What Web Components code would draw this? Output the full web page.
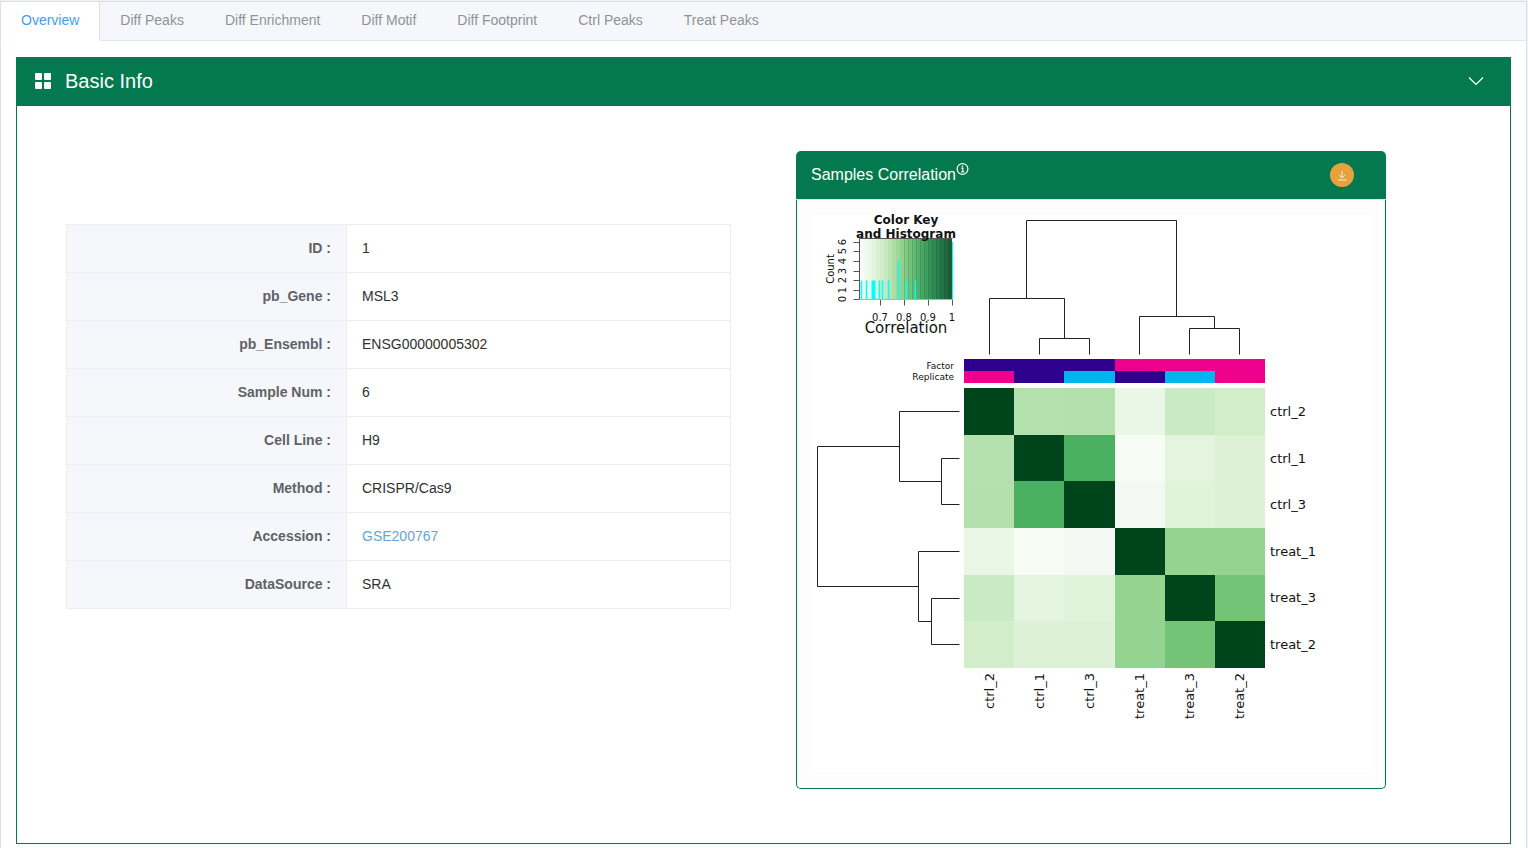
<!DOCTYPE html>
<html lang="en">
<head>
<meta charset="utf-8">
<meta name="viewport" content="width=device-width, initial-scale=1">
<title>Dataset overview</title>
<style>
  body { margin: 0; background: #eef4f6; color: #303133; font: 14px/20px "Liberation Sans", Arial, sans-serif; }
</style>
</head>
<body>
<dataset-page></dataset-page>

<template id="page-template">
  <style>
    :host { display: block; padding: 1px 1px 0 0; }
    main { box-sizing: border-box; min-height: calc(100vh - 1px); background: #fff; border: 1px solid #dcdfe6; border-bottom: 0; }
    .content { padding: 16px 15px 4px; }
    .columns { display: grid; grid-template-columns: minmax(0, 665fr) minmax(0, 590fr); gap: 65px; align-items: start; padding: 45px 124px 54px 49px; }
    info-table { margin-top: 73px; }
    @media (max-width: 1000px) { .columns { grid-template-columns: 1fr; padding: 24px; gap: 24px; } info-table { margin-top: 0; } }
  </style>
  <main>
    <tab-bar></tab-bar>
    <div class="content">
      <fold-panel>
        <span slot="title">Basic Info</span>
        <div class="columns">
          <info-table></info-table>
          <plot-card>
            <span slot="title">Samples Correlation</span>
            <correlation-heatmap></correlation-heatmap>
          </plot-card>
        </div>
      </fold-panel>
    </div>
  </main>
</template>

<template id="tabs-template">
  <style>
    :host { display: flow-root; background: #f5f7fa; border-bottom: 1px solid #e4e7ed; }
    [role=tablist] { display: flex; margin: -1px 0 -1px -1px; }
    button { box-sizing: border-box; height: 40px; margin: 0 -1px 0 0; padding: 0 20px 2px; border: 1px solid transparent; background: none; color: #909399; font: inherit; white-space: nowrap; cursor: pointer; }
    button[aria-selected=true] { color: #409eff; background: #fff; border-color: #dcdfe6; border-bottom-color: #fff; }
  </style>
  <div role="tablist"></div>
</template>

<template id="panel-template">
  <style>
    :host { display: block; border: 1px solid #04784f; }
    button { box-sizing: border-box; display: flex; align-items: center; gap: 14px; width: 100%; height: 48px; padding: 0 26px 2px 18px; border: 0; background: #04784f; color: #fff; font: inherit; font-size: 20px; line-height: 24px; text-align: left; cursor: pointer; }
    .title { flex: 1; }
    svg { display: block; fill: #fff; }
    .arrow { fill: none; stroke: #fff; }
  </style>
  <button type="button" aria-expanded="true">
    <svg width="16" height="16" viewBox="0 0 16 16" aria-hidden="true"><rect width="7" height="7" rx="1"/><rect x="9" width="7" height="7" rx="1"/><rect y="9" width="7" height="7" rx="1"/><rect x="9" y="9" width="7" height="7" rx="1"/></svg>
    <span class="title"><slot name="title"></slot></span>
    <svg class="arrow" width="16" height="16" viewBox="0 0 16 16" aria-hidden="true"><path d="M1 4.5 8 11.5 15 4.5" stroke-width="1.2"/></svg>
  </button>
  <div class="body"><slot></slot></div>
</template>

<template id="table-template">
  <style>
    :host { display: block; }
    table { width: 100%; border-collapse: collapse; table-layout: fixed; }
    th, td { box-sizing: border-box; height: 48px; padding: 0 15px 2px; border: 1px solid #ebeef5; }
    th { width: 280px; background: #f5f7fa; color: #606266; text-align: right; }
    td { color: #303133; }
    a { color: #67a5d1; text-decoration: none; }
  </style>
  <table><tbody></tbody></table>
</template>

<template id="card-template">
  <style>
    :host { display: block; }
    header { box-sizing: border-box; display: flex; align-items: center; justify-content: space-between; height: 49px; padding: 0 32px 0 15px; border-bottom: 1px solid #d5e9e1; border-radius: 5px 5px 0 0; background: #04784f; background-clip: padding-box; color: #fff; }
    h3 { display: flex; align-items: flex-start; margin: 0; font-size: 16px; font-weight: 400; line-height: 24px; }
    svg { display: block; }
    button { display: grid; place-items: center; width: 24px; height: 24px; padding: 0; border: 0; border-radius: 50%; background: #e6a23c; cursor: pointer; }
    .body { padding: 15px; border: 1px solid #04784f; border-top: 0; border-radius: 0 0 5px 5px; background: #fdfdfd; }
  </style>
  <header>
    <h3><slot name="title"></slot>
      <svg width="13" height="13" viewBox="0 0 13 13" fill="none" stroke="#fff" stroke-width="1.2" aria-hidden="true"><circle cx="6.5" cy="6" r="5.4"/><path d="M5.2 5.2H6.8V9M5 9H8.4"/><circle cx="6.5" cy="3.2" r=".8" fill="#fff" stroke="none"/></svg>
    </h3>
    <button type="button" aria-label="Download plot">
      <svg width="12" height="12" viewBox="0 0 12 12" fill="none" stroke="#fff" stroke-opacity=".8" aria-hidden="true"><path d="M6 2V9M3 6 6 9 9 6M2 11H10.5"/></svg>
    </button>
  </header>
  <div class="body"><slot></slot></div>
</template>

<template id="heatmap-template">
  <style>
    :host { display: block; background: #fff; }
    svg { display: block; width: 100%; height: auto; overflow: visible; }
    text { font-family: "DejaVu Sans", sans-serif; fill: #111; }
    .tree { fill: none; stroke: #222; }
    .axis { fill: none; stroke: #555; }
    .bars { fill: none; stroke: #0ff; }
  </style>
  <svg viewBox="0 0 558 558" role="img" aria-label="Sample correlation heatmap"></svg>
</template>

<script>
class TemplateElement extends HTMLElement {
  constructor(templateId) {
    super();
    this.attachShadow({ mode: "open" }).append(document.getElementById(templateId).content.cloneNode(true));
  }
}

customElements.define("tab-bar", class extends TemplateElement {
  constructor() {
    super("tabs-template");
    const list = this.shadowRoot.querySelector("[role=tablist]");
    ["Overview", "Diff Peaks", "Diff Enrichment", "Diff Motif", "Diff Footprint", "Ctrl Peaks", "Treat Peaks"].forEach((name, i) => {
      const tab = document.createElement("button");
      tab.type = "button";
      tab.textContent = name;
      tab.setAttribute("role", "tab");
      tab.setAttribute("aria-selected", String(i === 0));
      tab.addEventListener("click", () => {
        for (const other of list.children) other.setAttribute("aria-selected", String(other === tab));
      });
      list.append(tab);
    });
  }
});

customElements.define("fold-panel", class extends TemplateElement {
  constructor() {
    super("panel-template");
    const button = this.shadowRoot.querySelector("button");
    const body = this.shadowRoot.querySelector(".body");
    button.addEventListener("click", () => {
      body.hidden = !body.hidden;
      button.setAttribute("aria-expanded", String(!body.hidden));
    });
  }
});

customElements.define("info-table", class extends TemplateElement {
  constructor() {
    super("table-template");
    const rows = [["ID", "1"], ["pb_Gene", "MSL3"], ["pb_Ensembl", "ENSG00000005302"], ["Sample Num", "6"], ["Cell Line", "H9"], ["Method", "CRISPR/Cas9"], ["Accession", '<a href="#GSE200767">GSE200767</a>'], ["DataSource", "SRA"]];
    this.shadowRoot.querySelector("tbody").innerHTML = rows.map(([k, v]) => `<tr><th scope="row">${k} :</th><td>${v}</td></tr>`).join("");
  }
});

customElements.define("plot-card", class extends TemplateElement {
  constructor() { super("card-template"); }
});

customElements.define("correlation-heatmap", class extends TemplateElement {
  constructor() {
    super("heatmap-template");
    const names = ["ctrl_2", "ctrl_1", "ctrl_3", "treat_1", "treat_3", "treat_2"];
    const xs = [152, 202, 252, 303, 353, 403, 453];
    const ys = [173, 220, 266, 313, 360, 406, 453];
    const rowBaselines = [201, 248, 294, 341, 387, 434];
    const self = "#00441b";
    const cells = [
      [self, "#b5e1ae", "#b3e0ac", "#eaf6e6", "#c9eac4", "#d1edca"],
      ["#b5e1ae", self, "#4ab062", "#f7fcf5", "#e3f4df", "#dcf1d6"],
      ["#b3e0ac", "#4ab062", self, "#f3f9f2", "#e0f3db", "#dcf1d6"],
      ["#eaf6e6", "#f7fcf5", "#f3f9f2", self, "#94d390", "#94d390"],
      ["#c9eac4", "#e3f4df", "#e0f3db", "#94d390", self, "#73c476"],
      ["#d1edca", "#dcf1d6", "#dcf1d6", "#94d390", "#73c476", self]
    ];
    const navy = "#2e008b", pink = "#ee008c", cyan = "#00b5ef";
    const factor = [navy, navy, navy, pink, pink, pink];
    const replicate = [pink, navy, cyan, navy, cyan, pink];
    const rect = (x, y, w, h, fill) => `<rect x="${x}" y="${y}" width="${w}" height="${h}" fill="${fill}"/>`;
    const text = (x, y, size, s, extra = "") => `<text x="${x}" y="${y}" font-size="${size}" ${extra}>${s}</text>`;
    const turned = (x, y, size, s, anchor) => text(0, 0, size, s, `text-anchor="${anchor}" transform="translate(${x} ${y}) rotate(-90)"`);

    // Colour key: sequential green ramp in narrow bands
    const ramp = [[247,252,245],[229,245,224],[203,235,196],[170,219,162],[130,202,130],[88,180,108],[58,152,90],[38,124,74],[30,92,56]];
    const shade = t => {
      const p = t * 8, i = Math.min(7, Math.floor(p)), f = p - i;
      return `rgb(${ramp[i].map((c, k) => Math.round(c + (ramp[i + 1][k] - c) * f))})`;
    };
    let out = '<g shape-rendering="crispEdges">';
    for (let x = 0; x < 92; x += 4) out += rect(48 + x, 23, 4, 61, shade(x / 88));
    for (let x = 44; x < 92; x += 4) out += `<rect x="${48 + x}" y="23" width="1" height="61" fill="#034" fill-opacity=".12"/>`;
    names.forEach((_, c) => {
      const w = xs[c + 1] - xs[c];
      out += rect(xs[c], 144, w, 12, factor[c]) + rect(xs[c], 156, w, 12, replicate[c]);
      names.forEach((_, r) => { out += rect(xs[c], ys[r], w, ys[r + 1] - ys[r], cells[r][c]); });
    });
    out += "</g>";

    out += `<g transform="translate(.5 .5)">
      <path class="axis" d="M47 84V23H140M41 84H47M41 75H47M41 65H47M41 56H47M41 46H47M41 36H47M41 27H47M68 84V90M92 84V90M116 84V90M140 84V90"/>
      <path class="bars" d="M48 84H140V26"/>
      <path class="bars" stroke-width="1.5" d="M49 84V65M54 84V65M67 84V65M70 84V65M76 84V65M86 84V46M94 84V65M103 84V65"/>
      <path class="bars" stroke-width="2" d="M60 84V65M62 84V65"/>
      <path class="tree" d="M177 139V83H252V123M227 139V123H277V139M214 83V5H364V101M327 139V101H402V113M377 139V113H427V139"/>
      <path class="tree" d="M147 196H87V266H129M147 243H129V289H147M87 231H5V371H106M147 336H106V406H119M147 383H119V429H147"/>
    </g>`;

    out += text(94, 9, 12, "Color Key", 'font-weight="700" text-anchor="middle"');
    out += text(94, 23, 12, "and Histogram", 'font-weight="700" text-anchor="middle"');
    out += text(94, 118, 15, "Correlation", 'text-anchor="middle"');
    [["0.7", 68], ["0.8", 92], ["0.9", 116], ["1", 140]].forEach(([s, x]) => { out += text(x, 106, 10, s, 'text-anchor="middle"'); });
    [84, 75, 65, 56, 46, 36, 27].forEach((y, i) => { out += turned(34, y, 10, i, "middle"); });
    out += turned(22, 54, 10, "Count", "middle");
    out += text(142, 154, 9, "Factor", 'text-anchor="end"') + text(142, 165, 9, "Replicate", 'text-anchor="end"');
    names.forEach((name, i) => {
      out += text(458, rowBaselines[i], 13, name);
      out += turned(182 + i * 50, 458, 13, name, "end");
    });
    this.shadowRoot.querySelector("svg").innerHTML = out;
  }
});

customElements.define("dataset-page", class extends TemplateElement {
  constructor() { super("page-template"); }
});
</script>
</body>
</html>
